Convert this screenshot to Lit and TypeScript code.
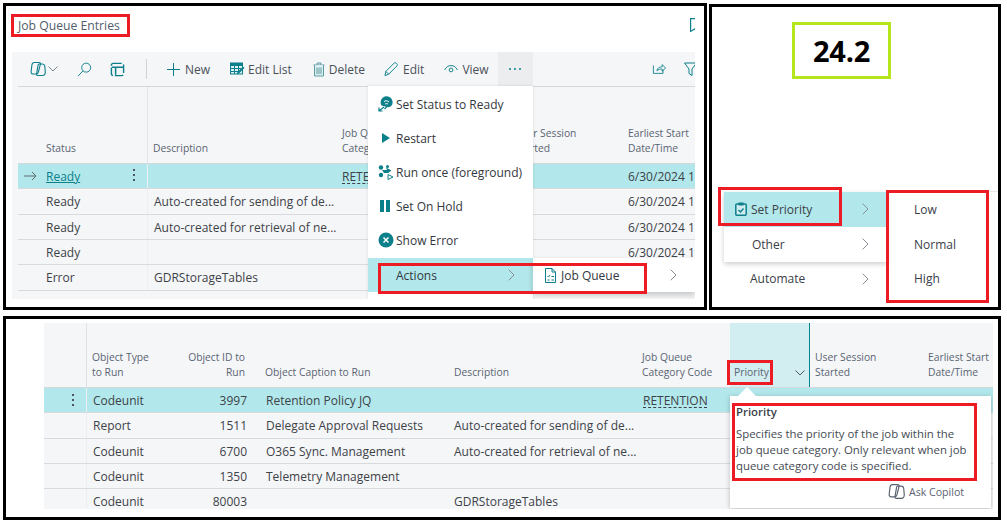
import { LitElement, html, css, svg } from "lit";
import { customElement } from "lit/decorators.js";

const T = "#0b7f8a";
const ic = (w: number, h: number, body: unknown, vb = "0 0 16 16") =>
  html`<svg class="ic" width=${w} height=${h} viewBox=${vb} fill="none" stroke=${T} stroke-width="1">${body}</svg>`;

const copilot = (c = T, s = 16) => html`<svg class="ic" width=${s} height=${s} viewBox="0 0 16 16" fill="none" stroke=${c} stroke-width="1.100">
  <path d="M4.200 1.500h4.900c1 0 1.500.7 1.300 1.600L8.400 11.200c-.3 1.100-1 1.800-2 1.800H3c-1.300 0-2-1-1.900-2.200l.8-6.800C2.100 2.500 3 1.500 4.200 1.500Z"/>
  <path d="M9 3h3.400c1.300 0 2.200 1 2.400 2.200l.5 6c.1 1.900-1 3.300-2.800 3.300H7.900c-1 0-1.500-.7-1.300-1.600L8 4.400C8.100 3.600 8.400 3 9 3Z"/></svg>`;
const chev = (c = "#7c8894") => html`<svg class="ic" width="10" height="6" viewBox="0 0 10 6" fill="none" stroke=${c} stroke-width="1"><path d="M.5.5 5 5 9.500.5"/></svg>`;
const right = () => html`<svg class="ic" width="7" height="12" viewBox="0 0 7 12" fill="none" stroke="#8a8f96" stroke-width="1"><path d="M.7.7 6 6 .7 11.300"/></svg>`;
const search = () => ic(15, 15, svg`<circle cx="9.800" cy="6" r="4.800"/><path d="M6.300 9.500 1.200 15"/>`);
const layout = () => ic(15, 15, svg`<rect x="1.500" y="1.500" width="13" height="13" rx="2" stroke-width="1.500" stroke-dasharray="9 2"/><path d="M2 5.500h12M6 5.500v8" stroke-width="1.600"/>`);
const plus = () => html`<svg class="ic" width="15" height="15" viewBox="0 0 15 15" stroke=${T}><path d="M7.500 1v13M1 7.500h13"/></svg>`;
const editList = () => html`<svg class="ic" width="15" height="14" viewBox="0 0 15 14" fill="none"><rect x=".5" y="1" width="12" height="11" fill="#e1f1f3" stroke=${T}/><path d="M.5 1h12v3H.5z" fill=${T}/><path d="M1 6.500h10M1 9.500h7M4.500 4v8M8.500 4v6" stroke=${T}/><path d="m6.500 12.500 1-2.500 5.500-5.500 1.500 1.500-5.500 5.500z" fill=${T}/></svg>`;
const trash = () => html`<svg class="ic" width="12" height="15" viewBox="0 0 12 15" fill="#dbeef0" stroke="#5f9ba3"><path d="M.5 3h11M4 3V1h4v2"/><path d="M1.500 3v11h9V3"/><path d="M4 5.500V12M6 5.500V12M8 5.500V12"/></svg>`;
const pencil = () => ic(15, 15, svg`<path d="M1 14.500 2 10 10.800 1.200c.6-.6 1.400-.6 2 0l1 1c.6.6.6 1.400 0 2L5 13Z"/><path d="M2 10l3 3"/>`);
const eye = () => ic(15, 15, svg`<path d="M.7 8.500C2 5.500 4.600 3.800 7.500 3.800s5.500 1.700 6.800 4.700"/><circle cx="7.500" cy="8.500" r="2"/>`);
const share = () => ic(15, 14, svg`<path d="M1 4v9h11V9"/><path d="M5 10c.5-3 3-4.500 6-4.500V3l4 3.800-4 3.700V8c-2.500 0-4.500.5-6 2Z"/>`);
const filter = () => html`<svg class="ic" width="13" height="14" viewBox="0 0 13 14" fill="none" stroke=${T}><path d="M.5 1h12L8 7v6.500L5 11.500V7Z"/></svg>`;
const bookmark = () => html`<svg class="ic" width="11" height="14" viewBox="0 0 11 14" fill="none" stroke=${T} stroke-width="1.200"><path d="M.6.6h9.800v12.800L5 10.800.6 13.400Z"/></svg>`;
const arrow = () => html`<svg class="ic" width="13" height="10" viewBox="0 0 13 10" fill="none" stroke="#5d6b70"><path d="M0 5h12M8 1l4 4-4 4"/></svg>`;
const vdots = () => html`<span class="vdots"><i></i><i></i><i></i></span>`;
const iStatus = () => html`<svg class="ic" width="16" height="16" viewBox="0 0 16 16"><path d="M3.500 9.500A6 6 0 1 1 14 9c-.8 1.500-3 2.500-5 2Z" fill=${T}/><path d="M6 5.500c1.500-1 3.500-1 5 .5M7 8c1-.5 2-.5 3 0" stroke="#fff" fill="none"/><path d="M1 15l5-4M1 11.500V15h3.500M9 10.500 6.500 13" stroke=${T} fill="none" stroke-width="1.200"/></svg>`;
const iPlay = () => html`<svg class="ic" width="16" height="16" viewBox="0 0 16 16"><path d="M4 3l8 5-8 5Z" fill=${T}/></svg>`;
const iRun = () => html`<svg class="ic" width="16" height="16" viewBox="0 0 16 16" fill=${T}><circle cx="3" cy="3.500" r="2.200"/><circle cx="3" cy="11" r="2.200"/><path d="M4 6h5l-1-2.500 5.500 3L10 9H6Z"/><circle cx="9.500" cy="2.500" r="1.500"/><path d="M10 10.500l5 2.500-5 2.500Z" fill="none" stroke=${T}/></svg>`;
const iPause = () => html`<svg class="ic" width="16" height="16" viewBox="0 0 16 16" fill=${T}><rect x="2" y="2" width="4" height="12"/><rect x="8" y="2" width="4" height="12"/></svg>`;
const iErr = () => html`<svg class="ic" width="16" height="16" viewBox="0 0 16 16"><circle cx="8" cy="8" r="7.500" fill=${T}/><path d="M5.500 5.500l5 5M10.500 5.500l-5 5" stroke="#fff" stroke-width="1.500"/></svg>`;
const iJob = () => html`<svg class="ic" width="11" height="15" viewBox="0 0 11 15" fill="none" stroke=${T}><path d="M.5.5h6.500l3.500 3.500v10.500H.5ZM7 .5V4h3.500"/><path d="M2.500 8l1 1 1.500-2M6.500 8.500h2.500M2.500 12h2M6.500 12h2.500"/></svg>`;
const iClip = () => html`<svg class="ic" width="12" height="14" viewBox="0 0 12 14" fill="none"><rect x=".8" y="2" width="10.400" height="11.200" rx="1" stroke=${T} stroke-width="1.500" fill="#d2edf0"/><rect x="3.500" y=".5" width="5" height="3" fill=${T}/><path d="M3.500 8l2 2 3-3.500" stroke=${T} stroke-width="1.400"/></svg>`;

const tBtn = (i: unknown, t: string, cls = "") => html`<span class="tbtn ${cls}">${i}<span>${t}</span></span>`;
const mItem = (i: unknown, t: string) => html`<div class="mitem"><span class="mi">${i}</span><span>${t}</span></div>`;

@customElement("app-root")
export class AppRoot extends LitElement {
  static styles = css`
    :host { display: block; width: 1007px; height: 525px; background: #fff; overflow: hidden;
      font-family: "Open Sans", "Liberation Sans", sans-serif; font-size: 12px; color: #3d4248; }
    * { box-sizing: border-box; }
    .ic { display: block; flex: none; }
    .root { display: grid; grid-template-columns: 704px 292px; grid-template-rows: 307px 204px; column-gap: 2px; row-gap: 6px; padding: 3px 0 0 3px; }
    .panel { border: 3px solid #000; position: relative; overflow: hidden; background: #fff; }
    .p3 { grid-column: 1 / 3; }
    .redbox { border: 3px solid #ed1c24; }
    .over { position: absolute; pointer-events: none; }
    .box-a { left: 372px; top: 257px; width: 269px; height: 31px; }
    .box-b { left: 6px; top: 180px; width: 124px; height: 39px; }
    .box-c { left: 174px; top: 183px; width: 103px; height: 113px; }
    .box-d { left: 721px; top: 41px; width: 46px; height: 25px; }
    .box-e { left: 726px; top: 84px; width: 245px; height: 78px; }

    .titlebar { display: flex; justify-content: space-between; align-items: flex-start; width: 689px; padding: 8px 0 0 5px; height: 46px; }
    .title { height: 23px; width: 119px; display: flex; align-items: center; padding-left: 4px; font-size: 12.200px; color: #535c6c; }
    .bm { width: 5px; overflow: hidden; margin-top: 4px; }

    .card { background: #f5f6f8; }
    .c1 { margin-left: 6px; width: 683px; height: 247px; position: relative; padding-left: 6px; overflow: hidden; }
    .toolbar { display: flex; align-items: center; height: 34px; padding-left: 12px; color: #4a5058; font-size: 12px; }
    .tbtn { display: flex; align-items: center; gap: 5px; }
    .nw { gap: 4px; }
    .tb-sp1 { margin-left: 2px; }
    .search { margin-left: 19px; }
    .lay { margin-left: 18px; }
    .sep { width: 1px; height: 20px; background: #cfd2d6; margin: 0 19px 0 21px; }
    .edl { margin-left: 20px; gap: 3px; }
    .del { margin-left: 21px; gap: 4px; }
    .edit { margin-left: 19px; gap: 4px; }
    .view { margin-left: 20px; gap: 3px; }
    .more { margin-left: 9px; width: 35px; height: 34px; background: #ebedef; display: flex; align-items: center; justify-content: center; gap: 3px; }
    .more i { width: 2px; height: 2px; border-radius: 50%; background: #0b7f8a; }
    .shr { margin-left: auto; }
    .flt { margin-left: 17px; width: 11px; overflow: hidden; }

    .table { border-top: 1px solid #d5d8db; }
    .t3 { border-top: 0; }
    .hdr { display: grid; align-items: end; color: #5a6472; font-size: 10.300px; line-height: 15px; border-bottom: 1px solid #d5d8db; }
    .row { display: grid; height: 25.330px; align-items: start; border-bottom: 1px solid #d8dadd; white-space: nowrap; }
    .row.sel { background: #b2e8eb; }
    .row > span, .hdr > span { overflow: hidden; white-space: nowrap; padding-left: 5px; }
    .row > span { line-height: 24px; height: 24.330px; padding-top: 1px; }

    .t1 .hdr, .t1 .row { grid-template-columns: 130px 189px 173px 113px 72px; }
    .t1 .hdr { height: 77px; padding-bottom: 7px; }
    .t1 .hdr > span:first-child { padding-left: 28px; line-height: 15px; display: flex; align-items: flex-end; margin-bottom: -7px; padding-bottom: 7px; height: 76px; border-right: 1px solid #e3e5e8; }
    .stat { display: flex; align-items: flex-start; position: relative; padding-left: 28px !important; border-right: 1px solid #edeff1; }
    .arr { position: absolute; left: 6px; top: 7px; }
    .vdots { display: flex; flex-direction: column; gap: 3px; }
    .vdots i { width: 2px; height: 2px; background: #4b5560; display: block; }
    .stat .vdots { position: absolute; right: 12px; top: 5px; }
    .link { color: #0b7f8a; text-decoration: underline; }
    .dashed { text-decoration: underline dashed; text-underline-offset: 2px; }
    .desc { padding-left: 6px !important; }

    .menu { position: absolute; left: 356px; top: 34px; width: 165px; height: 213px; background: #fff; box-shadow: 0 0 3px rgba(0,0,0,.12); padding-top: 1px; color: #33383e; font-size: 12px; }
    .mitem { height: 34px; display: flex; align-items: center; position: relative; padding-left: 10px; }
    .mi { width: 18px; flex: none; display: flex; }
    .mitem.act { background: #b2e8eb; height: 34px; margin-top: 1px; padding-left: 28px; justify-content: space-between; padding-right: 18px; }
    .sub { position: absolute; left: 521px; top: 206px; width: 162px; height: 34px; background: #fff; box-shadow: 0 3px 6px rgba(0,0,0,.2); display: flex; align-items: center; padding: 0 18px 0 12px; color: #33383e; font-size: 12px; }
    .sub .lbl { margin-left: 5px; flex: 1; }

    .p2 { margin-top: 1px; display: flex; flex-direction: column; height: 306px; }
    .ver { margin: 15px 0 0 80px; width: 99px; height: 57px; border: 3px solid #b5e61d; display: flex; align-items: center; justify-content: center; font-weight: 700; font-size: 29px; color: #000; letter-spacing: -.2px; }
    .pm { display: flex; margin: 113px 0 0 12px; font-size: 12px; color: #3b4047; }
    .pl { width: 163px; }
    .pcard { background: #fff; box-shadow: 0 2px 5px rgba(0,0,0,.2); }
    .pi { height: 35px; display: flex; align-items: center; justify-content: space-between; padding: 0 18px 0 28px; }
    .pi.sel { background: #b2e8eb; padding-left: 11px; height: 34.500px; }
    .pi.sel > span { display: flex; align-items: center; gap: 4px; }
    .pi.au { padding-left: 26px; height: 34px; }
    .pr { flex: 1; border-top: 1px solid #e8e8e8; margin-top: -1px; padding-left: 27px; }
    .pr div { height: 35px; display: flex; align-items: center; color: #39404a; }
    .pr div:first-child { height: 34.500px; }
    .pr div:last-child { height: 34px; }

    .c3 { margin: 4px 0 0 38px; width: 949px; height: 186px; overflow: hidden; position: relative; }
    .t3 .hdr, .t3 .row { grid-template-columns: 43px 83px 80px 199px 188px 93px 80px 113px 70px; }
    .t3 .hdr { height: 65px; }
    .t3 .hdr > span { padding-bottom: 7px; }
    .t3 .hdr > span:first-child { height: 64px; border-right: 1px solid #e0e3e6; }
    .t3 .row > .gut { display: flex; align-items: center; justify-content: flex-end; padding: 0 12px 0 0; border-right: 1px solid #eceef0; }
    .num { text-align: right; padding-right: 0; }
    .t3 .hdr .num { padding-right: 5px; }
    .t3 .row .num { padding-right: 3px; }
    .t3 .row > span:nth-child(4) { padding-left: 16px; }
    .t3 .hdr > span:nth-child(4) { padding-left: 15px; }
    .t3 .row > span:nth-child(2) { padding-left: 6px; }
    .t3 .row > span:nth-child(6) { padding-left: 6px; }
    .t3 .hdr > span.pcol { background: #d3eef1; height: 64px; border-right: 1.500px solid #00838f; display: flex; align-items: flex-end; justify-content: space-between; padding-right: 4px; padding-left: 4px; }
    .pcol .ic { margin-bottom: 4px; }
    .tip { position: absolute; left: 686px; top: 73px; width: 261px; height: 112px; background: #fff; box-shadow: 0 1px 5px rgba(0,0,0,.25); padding: 8px 0 0 6px; font-size: 11.400px; line-height: 16px; color: #444a52; }
    .tip::before { content: ""; position: absolute; left: 8px; top: -9px; border: 9.500px solid transparent; border-top: 0; border-bottom: 9px solid #fff; }
    .tip b { display: block; font-weight: 600; margin-bottom: 6px; color: #3c4149; }
    .ask { position: absolute; left: 158px; top: 87px; display: flex; align-items: center; gap: 4px; color: #5a6270; font-size: 10.600px; }
  `;

  render() {
    const dates = "6/30/2024 1";
    return html`<div class="root">
      <section class="panel">
        <div class="titlebar"><div class="title redbox">Job Queue Entries</div><div class="bm">${bookmark()}</div></div>
        <div class="card c1">
          <div class="toolbar">
            ${copilot()}<span class="tb-sp1">${chev()}</span>
            <span class="search">${search()}</span><span class="lay">${layout()}</span>
            <span class="sep"></span>
            ${tBtn(plus(), "New", "nw")}${tBtn(editList(), "Edit List", "edl")}${tBtn(trash(), "Delete", "del")}
            ${tBtn(pencil(), "Edit", "edit")}${tBtn(eye(), "View", "view")}
            <span class="more"><i></i><i></i><i></i></span>
            <span class="shr">${share()}</span><span class="flt">${filter()}</span>
          </div>
          <div class="table t1">
            <div class="hdr"><span>Status</span><span>Description</span><span>Job Queue<br />Category Code</span><span>User Session<br />Started</span><span>Earliest Start<br />Date/Time</span></div>
            <div class="row sel"><span class="stat"><span class="arr">${arrow()}</span><span class="link">Ready</span>${vdots()}</span><span></span><span class="dashed">RETENTION</span><span></span><span>${dates}</span></div>
            <div class="row"><span class="stat">Ready</span><span class="desc">Auto-created for sending of de...</span><span></span><span></span><span>${dates}</span></div>
            <div class="row"><span class="stat">Ready</span><span class="desc">Auto-created for retrieval of ne...</span><span></span><span></span><span>${dates}</span></div>
            <div class="row"><span class="stat">Ready</span><span></span><span></span><span></span><span>${dates}</span></div>
            <div class="row"><span class="stat">Error</span><span class="desc">GDRStorageTables</span><span></span><span></span><span></span></div>
          </div>
          <div class="menu">
            ${mItem(iStatus(), "Set Status to Ready")}${mItem(iPlay(), "Restart")}${mItem(iRun(), "Run once (foreground)")}
            ${mItem(iPause(), "Set On Hold")}${mItem(iErr(), "Show Error")}
            <div class="mitem act"><span>Actions</span>${right()}</div>
          </div>
          <div class="sub">${iJob()}<span class="lbl">Job Queue</span>${right()}</div>
        </div>
        <div class="over redbox box-a"></div>
      </section>

      <section class="panel p2">
        <div class="ver">24.2</div>
        <div class="pm">
          <div class="pl">
            <div class="pcard">
              <div class="pi sel"><span>${iClip()}Set Priority</span>${right()}</div>
              <div class="pi"><span>Other</span>${right()}</div>
            </div>
            <div class="pi au"><span>Automate</span>${right()}</div>
          </div>
          <div class="pr"><div>Low</div><div>Normal</div><div>High</div></div>
        </div>
        <div class="over redbox box-b"></div>
        <div class="over redbox box-c"></div>
      </section>

      <section class="panel p3">
        <div class="card c3">
          <div class="table t3">
            <div class="hdr"><span></span><span>Object Type<br />to Run</span><span class="num">Object ID to<br />Run</span><span>Object Caption to Run</span><span>Description</span><span>Job Queue<br />Category Code</span>
              <span class="pcol"><span>Priority</span>${chev("#4f5a66")}</span><span>User Session<br />Started</span><span>Earliest Start<br />Date/Time</span></div>
            ${[
              ["Codeunit", "3997", "Retention Policy JQ", "", "RETENTION"],
              ["Report", "1511", "Delegate Approval Requests", "Auto-created for sending of de...", ""],
              ["Codeunit", "6700", "O365 Sync. Management", "Auto-created for retrieval of ne...", ""],
              ["Codeunit", "1350", "Telemetry Management", "", ""],
              ["Codeunit", "80003", "", "GDRStorageTables", ""],
            ].map((r, i) => html`<div class="row ${i === 0 ? "sel" : ""}"><span class="gut">${i === 0 ? vdots() : ""}</span><span>${r[0]}</span><span class="num">${r[1]}</span><span>${r[2]}</span><span>${r[3]}</span><span class=${r[4] ? "dashed" : ""}>${r[4]}</span><span></span><span></span><span></span></div>`)}
          </div>
          <div class="tip"><b>Priority</b>Specifies the priority of the job within the<br />job queue category. Only relevant when job<br />queue category code is specified.
            <div class="ask">${copilot("#5a6270", 17)}<span>Ask Copilot</span></div>
          </div>
        </div>
        <div class="over redbox box-d"></div>
        <div class="over redbox box-e"></div>
      </section>
    </div>`;
  }
}
